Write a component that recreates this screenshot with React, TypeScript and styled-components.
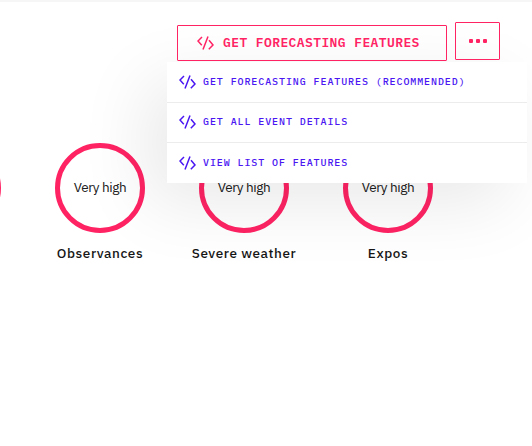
import React from "react";
import styled, { createGlobalStyle } from "styled-components";

const pink = "#ff2364";
const violet = "#4a16f2";

const GlobalStyle = createGlobalStyle`
  * { box-sizing: border-box; }
  body { margin: 0; background: #fff; overflow: hidden; font-family: "IBM Plex Sans", Roboto, sans-serif; }
`;

const Page = styled.main`
  height: 446px;
  overflow: hidden;
  border-top: 2px solid #f6f6f6;
  background: #fff;
`;

const Toolbar = styled.header`
  position: relative;
  z-index: 1;
  display: flex;
  justify-content: flex-end;
  gap: 8px;
  height: 59px;
  padding: 20px 32px 0 0;
`;

const PrimaryButton = styled.button`
  position: relative;
  z-index: 2;
  display: flex;
  align-items: center;
  gap: 9px;
  width: 270px;
  height: 36px;
  margin-top: 3px;
  padding: 0 0 0 19px;
  border: 1px solid ${pink};
  border-radius: 1px;
  background: transparent;
  color: ${pink};
  font: 600 13px/16px "IBM Plex Mono", "Liberation Mono", monospace;
  letter-spacing: 0.4px;
  white-space: nowrap;
`;

const ButtonText = styled.span`
  padding-bottom: 1px;
`;

const MoreButton = styled.button`
  position: relative;
  z-index: 2;
  display: flex;
  align-items: center;
  justify-content: center;
  gap: 3px;
  width: 45px;
  height: 38px;
  padding: 0;
  border: 1px solid ${pink};
  border-radius: 1px;
  background: transparent;
`;

const Dot = styled.i`
  width: 4px;
  height: 4px;
  border-radius: 1px;
  background: ${pink};
`;

const Menu = styled.div`
  position: absolute;
  top: 60px;
  right: 5px;
  width: 360px;
  height: 121px;
  background: #fff;
  box-shadow: -20px 20px 70px rgba(0, 0, 0, 0.09);
`;

const MenuItem = styled.div`
  display: flex;
  align-items: center;
  gap: 7px;
  height: 40px;
  padding-left: 12px;
  color: ${violet};
  font: 500 10px/14px "IBM Plex Mono", "DejaVu Sans Mono", monospace;
  letter-spacing: 0.91px;
  white-space: nowrap;
  & + & { border-top: 1px solid #ececec; }
  &:nth-child(2) { padding-bottom: 2px; }
  &:last-child { height: 41px; }
`;

const Scores = styled.section`
  display: flex;
  margin: 82px 0 0 -116px;
`;

const Score = styled.article`
  display: flex;
  flex: 0 0 144px;
  flex-direction: column;
  align-items: center;
  gap: 10px;
`;

const Ring = styled.div`
  display: flex;
  align-items: center;
  justify-content: center;
  width: 90px;
  height: 90px;
  padding-bottom: 2px;
  border: 5.5px solid ${pink};
  border-radius: 50%;
  color: #202020;
  font-size: 13.5px;
  letter-spacing: -0.4px;
`;

const Label = styled.div`
  color: #161616;
  font-size: 13.5px;
  line-height: 20px;
  font-weight: 500;
  letter-spacing: 0.57px;
  white-space: nowrap;
`;

const CodeSvg = styled.svg`
  flex: none;
  width: 17px;
  height: 16px;
  fill: none;
  stroke: currentColor;
  stroke-width: 1.5;
`;

const CodeIcon = () => (
  <CodeSvg viewBox="0 0 17 16">
    <path d="M5 2 1 6l3.8 4.2M11 1.5 6 14.5M12 5.3 16 10l-4.2 4.2" />
  </CodeSvg>
);

const actions = ["GET FORECASTING FEATURES (RECOMMENDED)", "GET ALL EVENT DETAILS", "VIEW LIST OF FEATURES"];
const scores = ["", "Observances", "Severe weather", "Expos"];

export default function App() {
  return (
    <Page>
      <GlobalStyle />
      <Toolbar>
        <PrimaryButton><CodeIcon /><ButtonText>GET FORECASTING FEATURES</ButtonText></PrimaryButton>
        <MoreButton aria-label="More"><Dot /><Dot /><Dot /></MoreButton>
        <Menu>
          {actions.map((name) => <MenuItem key={name}><CodeIcon />{name}</MenuItem>)}
        </Menu>
      </Toolbar>
      <Scores>
        {scores.map((name) => (
          <Score key={name}>
            <Ring>{name && "Very high"}</Ring>
            <Label>{name}</Label>
          </Score>
        ))}
      </Scores>
    </Page>
  );
}
